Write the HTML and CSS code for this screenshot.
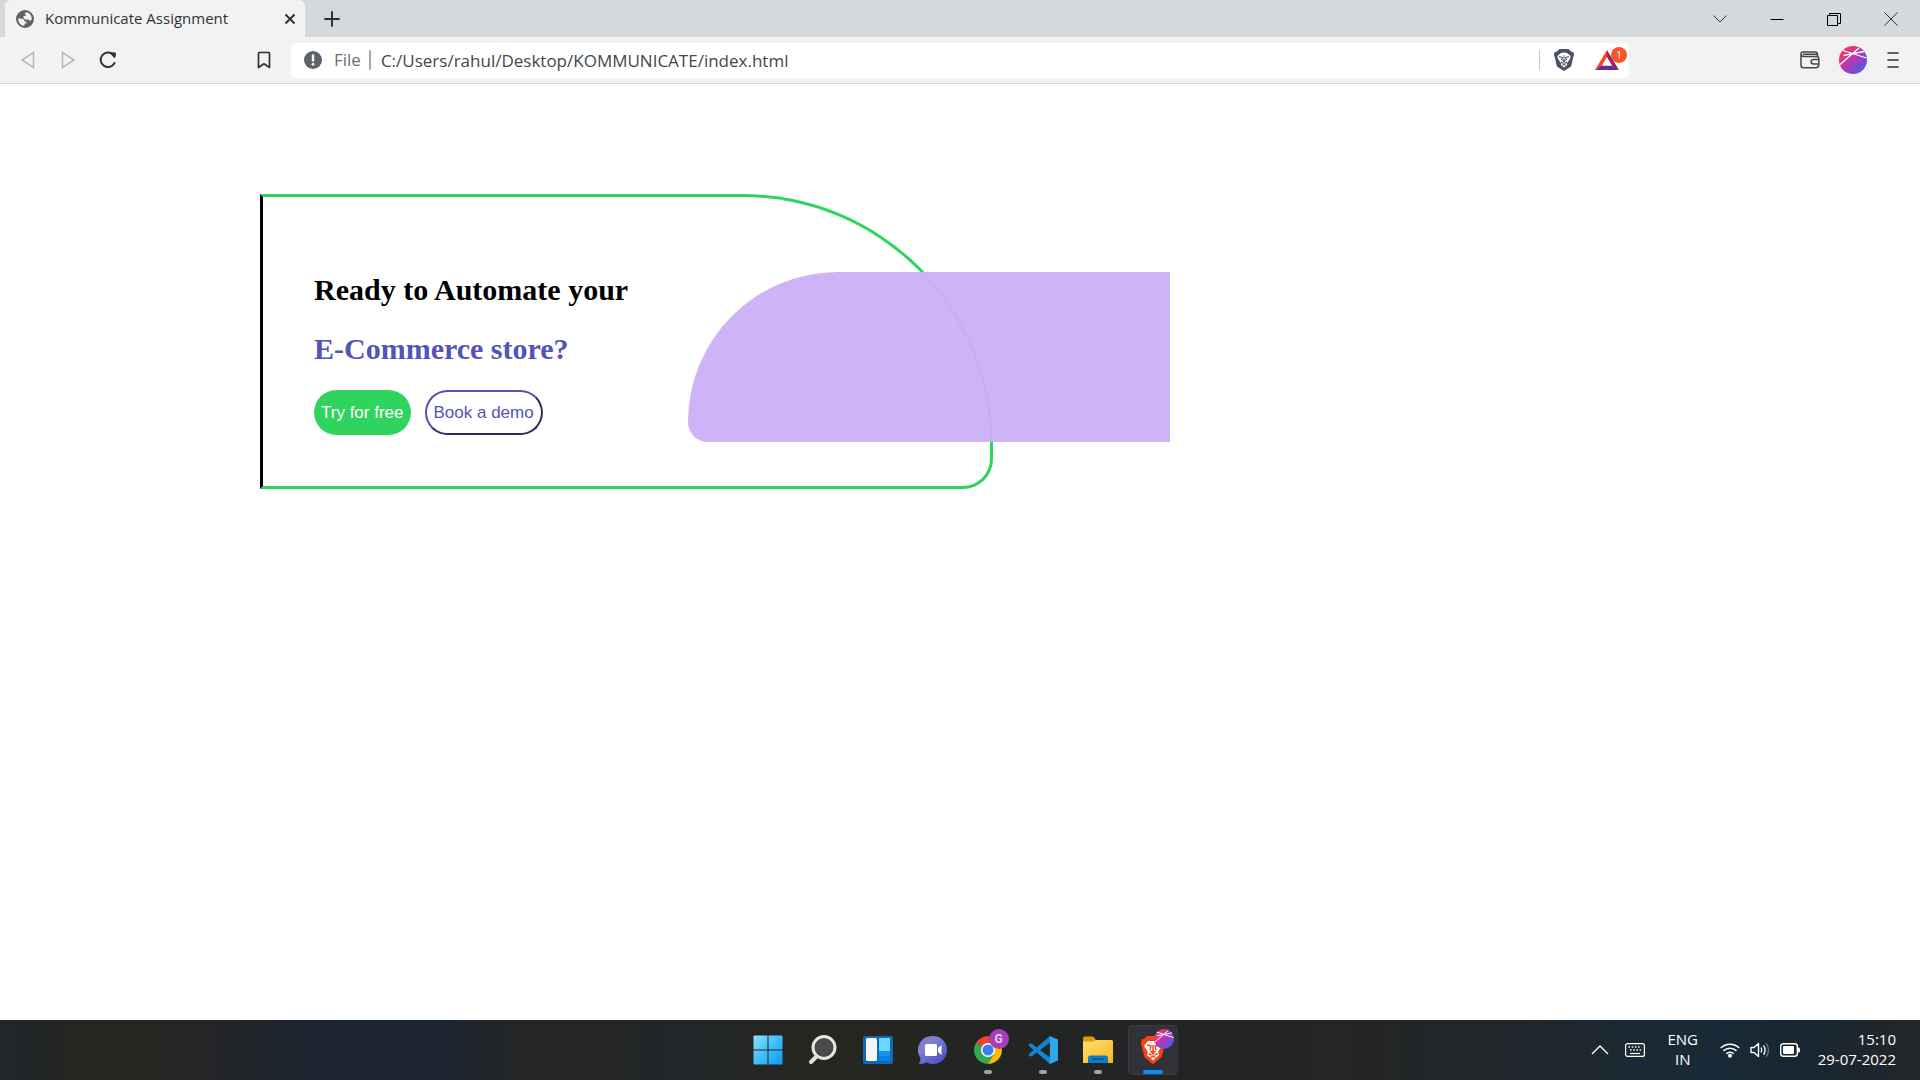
FILE: index.html
```html
<!DOCTYPE html>
<html lang="en">
<head>
<meta charset="utf-8">
<title>Kommunicate Assignment</title>
<link rel="stylesheet" href="styles.css">
</head>
<body>
<header class="browser">
  <div class="tabstrip">
    <div class="tab">
      <svg class="tab-icon" width="18" height="18" viewBox="0 0 18 18"><circle cx="9" cy="9" r="9" fill="#5f6368"/><path d="M2.200 8.500C7 8 8.500 9 8.500 11.500H10.500V13.500H8.500V15.800C4.500 15.800 2.200 12.500 2.200 8.500z" fill="#f2f2f2"/><path d="M10 2.200C14 2.500 16 6 15.800 9.500L14 11 12.500 9.500H9L7.500 8V6H9.500V4L8.500 3.500z" fill="#f2f2f2"/></svg>
      <span class="tab-title">Kommunicate Assignment</span>
      <button class="tab-close" aria-label="Close tab"><svg width="12" height="12" viewBox="0 0 12 12"><path d="M1.500 1.500l9 9M10.500 1.500l-9 9" stroke="#303236" stroke-width="2"/></svg></button>
    </div>
    <button class="new-tab" aria-label="New tab"><svg width="16" height="16" viewBox="0 0 16 16"><path d="M8 1v14M1 8h14" stroke="#303236" stroke-width="2" stroke-linecap="round"/></svg></button>
    <div class="window-controls">
      <button class="window-button" aria-label="Search tabs"><svg width="14" height="14" viewBox="0 0 14 14"><path d="M.5 3.500L7 10l6.500-6.500" fill="none" stroke="#333"/></svg></button>
      <button class="window-button" aria-label="Minimize"><svg width="14" height="14" viewBox="0 0 14 14"><path d="M.5 7.500h13" stroke="#000"/></svg></button>
      <button class="window-button" aria-label="Restore"><svg width="14" height="14" viewBox="0 0 14 14"><path d="M.5 3.500h10v10h-10zM2.500 3V1.500h11V11.500H11" fill="none" stroke="#000"/></svg></button>
      <button class="window-button" aria-label="Close window"><svg width="14" height="14" viewBox="0 0 14 14"><path d="M.5.5l13 13M13.500.5l-13 13" stroke="#333"/></svg></button>
    </div>
  </div>
  <div class="toolbar">
    <button class="tool" aria-label="Back" disabled><svg width="18" height="18" viewBox="0 0 18 18"><path d="M14.500 1.500v15L3 9z" fill="none" stroke="#b9b9b9" stroke-width="1.500" stroke-linejoin="round"/></svg></button>
    <button class="tool" aria-label="Forward" disabled><svg width="18" height="18" viewBox="0 0 18 18"><path d="M3.500 1.500v15L15 9z" fill="none" stroke="#b9b9b9" stroke-width="1.500" stroke-linejoin="round"/></svg></button>
    <button class="tool" aria-label="Reload"><svg width="18" height="18" viewBox="0 0 18 18"><path d="M14 3.500A7.300 7.300 0 1 0 15.500 12" fill="none" stroke="#303236" stroke-width="2" stroke-linecap="round"/><path d="M11.500 2.500q0-1.500 1.500-1.200l3 .2q1.300.2 1 1.500l-.5 3q-.5 1.200-1.700.7z" fill="#303236"/></svg></button>
    <button class="tool bookmark" aria-label="Bookmark this page"><svg width="14" height="18" viewBox="0 0 14 18"><path d="M1.500 2.200q0-.7.700-.7h9.600q.7 0 .7.700v14.300L7 12.800l-5.500 3.700z" fill="none" stroke="#303236" stroke-width="1.700" stroke-linejoin="round"/></svg></button>
    <div class="address">
      <svg width="18" height="18" viewBox="0 0 18 18"><circle cx="9" cy="9" r="9" fill="#5f6368"/><path d="M9 4.500v5" stroke="#fff" stroke-width="2.400" stroke-linecap="round"/><circle cx="9" cy="13.300" r="1.400" fill="#fff"/></svg>
      <label class="scheme" for="url">File</label>
      <input class="url" id="url" type="text" value="C:/Users/rahul/Desktop/KOMMUNICATE/index.html">
      <button class="tool shield" aria-label="Brave Shields"><svg width="20" height="22" viewBox="0 0 20 22"><path d="M5.500 0h9L17 2.500l2.300.5L20 6l-1 3-1.500 7q-.3 1.300-1.500 2.200L10 22l-6-3.800Q2.800 17.300 2.500 16L1 9 0 6l.7-3L3 2.500z" fill="#4c5063"/><path d="M10 3.500l3 .5 3.700 3-1 3.500-3 4 .5 1.500L10 18.500 6.800 16l.5-1.500-3-4-1-3.500L7 4z" fill="#fff"/><path d="M5 7.500l3.500 1-1 2.500M15 7.500l-3.500 1 1 2.500M7 13l2 1.300M13 13l-2 1.300" fill="none" stroke="#4c5063" stroke-width="1.100"/><path d="M10 6v5M8.500 11.300h3L10 13zM10 13v2M8.200 16.200L10 15l1.800 1.200" fill="#4c5063" stroke="#4c5063" stroke-width=".8"/></svg></button>
      <button class="tool rewards" aria-label="Brave Rewards"><svg width="24" height="20" viewBox="0 0 24 20"><path d="M12 0L0 20l7.500-4L12 8z" fill="#ff4724"/><path d="M12 0l12 20-7-4L12 8z" fill="#9e1f63"/><path d="M0 20h24l-7-4.500H7z" fill="#662d91"/><path d="M12 7l-5 8.500h10z" fill="#fff"/></svg><span class="rewards-count">1</span></button>
    </div>
    <button class="tool" aria-label="Wallet"><svg width="20" height="18" viewBox="0 0 20 18"><path d="M17.500 5.500V2.800Q17 1 15 1H3Q1 1 1 3v11q0 2.800 2.800 2.800h12q2.700 0 2.700-2.500M1 3.500q.5 2 2.500 2h13q2.300 0 2.300 2v7M3 3.300h14M18.800 8.500h-5q-2.700 0-2.700 2.200t2.700 2.200h5z" fill="none" stroke="#44464b" stroke-width="1.500"/></svg></button>
    <button class="tool profile" aria-label="Profile"><svg width="28" height="28" viewBox="0 0 28 28"><defs><linearGradient id="orb" x1=".1" y1=".15" x2=".85" y2=".9"><stop offset="0" stop-color="#f03a5b"/><stop offset=".45" stop-color="#bd35b0"/><stop offset="1" stop-color="#4d59e6"/></linearGradient></defs><circle cx="14" cy="14" r="14" fill="url(#orb)"/><path d="M4 4.500L27.500 12M1 18.500L20 2M4.500 9.500L25 5.500" fill="none" stroke="#fff" stroke-width="1.300"/></svg></button>
    <button class="tool" aria-label="Menu"><svg width="12" height="16" viewBox="0 0 12 16"><path d="M1 1h10M1 8h10M1 15h10" stroke="#303236" stroke-width="1.600" stroke-linecap="round"/></svg></button>
  </div>
</header>

<main class="page">
  <section class="card">
    <div class="shape"></div>
    <h1 class="headline">Ready to Automate your</h1>
    <h2 class="headline accent">E-Commerce store?</h2>
    <div class="actions">
      <button class="action try">Try for free</button>
      <button class="action demo">Book a demo</button>
    </div>
  </section>
</main>

<footer class="taskbar">
  <nav class="apps">
    <button class="app" aria-label="Start"><svg width="30" height="30" viewBox="0 0 30 30"><defs><linearGradient id="win" gradientUnits="userSpaceOnUse" x1="0" y1="0" x2="30" y2="30"><stop offset="0" stop-color="#8ee3fd"/><stop offset=".5" stop-color="#40c0fa"/><stop offset="1" stop-color="#0a98f5"/></linearGradient></defs><path d="M1 .5h13.500V14.500H.5V1zM15.500.5H29l.5.5v13.500h-14zM.5 15.500h14v14H1l-.5-.5zM15.500 15.500h14V29l-.5.5H15.500z" fill="url(#win)"/></svg></button>
    <button class="app" aria-label="Search"><svg width="30" height="30" viewBox="0 0 30 30"><path d="M9.500 20.500L3 27" stroke="#dedede" stroke-width="4" stroke-linecap="round"/><circle cx="16" cy="12.500" r="11" fill="#4a4a48" stroke="#e6e6e6" stroke-width="3"/></svg></button>
    <button class="app" aria-label="Widgets"><svg width="30" height="30" viewBox="0 0 30 30"><rect y="1" width="30" height="28" rx="2" fill="#1267b7"/><rect x="3" y="3" width="11" height="23" rx="1.500" fill="#f5f5f5"/><path d="M16 3h11v13H16z" fill="#6cd7ff"/><path d="M16 16h11v5H16z" fill="#1693ec"/><path d="M16 21h11v5H16z" fill="#0a83e8"/></svg></button>
    <button class="app" aria-label="Chat"><svg width="30" height="30" viewBox="0 0 30 30"><defs><linearGradient id="chat" x1="0" y1="0" x2=".8" y2="1"><stop offset="0" stop-color="#9a6d9f"/><stop offset=".35" stop-color="#7b83d6"/><stop offset="1" stop-color="#4f4cc4"/></linearGradient></defs><path d="M15 1A14 14 0 0 1 15 29q-4 0-6-1.500-4 1.500-8 1.500 1.500-3 1.500-6A14 14 0 0 1 15 1z" fill="url(#chat)"/><rect x="7" y="9" width="12" height="12" rx="1.500" fill="#fff"/><path d="M20 13l3.500-3v10L20 17z" fill="#fff"/></svg></button>
    <button class="app running" aria-label="Google Chrome"><svg width="30" height="30" viewBox="0 0 30 30"><path d="M15 15L2.900 8A14 14 0 0 1 27.100 8H15z" fill="#ea4335"/><path d="M15 15L2.900 8A14 14 0 0 0 15 29l6-10.500z" fill="#34a853"/><path d="M15 8h12.100A14 14 0 0 1 15 29l6.100-10.500z" fill="#fbbc05"/><circle cx="15" cy="15" r="7" fill="#fff"/><circle cx="15" cy="15" r="5.500" fill="#3b7ded"/></svg><span class="app-badge letter">G</span></button>
    <button class="app running" aria-label="Visual Studio Code"><svg width="30" height="30" viewBox="0 0 30 30"><path d="M1 9.500q1.300-1.700 3.200-.5L22 22.500V29L1 11z" fill="#0d87d6"/><path d="M1 20.500q1.300 1.700 3.200.5L22 7.500V1L1 19z" fill="#1683cb"/><path d="M21 .7L30 4.500v21L21 29.300q.9-.8.9-2V2.700q0-1.200-.9-2z" fill="#2fa6ee"/></svg></button>
    <button class="app running" aria-label="File Explorer"><svg width="30" height="30" viewBox="0 0 30 30"><defs><linearGradient id="folder" x1="0" y1="0" x2="1" y2="1"><stop offset="0" stop-color="#ffdf72"/><stop offset="1" stop-color="#f8b818"/></linearGradient></defs><path d="M0 3q0-1.500 1.500-1.500H10l3 3.500v3H0z" fill="#df9a08"/><path d="M0 6.500h10L13 5h15.500Q30 5 30 6.500V28H0z" fill="url(#folder)"/><path d="M5 28v-5q0-2.500 2.500-2.500h15q2.500 0 2.500 2.500v5z" fill="#087dcb"/><path d="M10 24h10" stroke="#064e86" stroke-width="1.500" stroke-linecap="round"/></svg></button>
    <button class="app active" aria-label="Brave"><svg width="30" height="30" viewBox="0 0 30 30"><path d="M9 1h12l3 3 2.500.5L27 9l-3.500 13L15 29.500 6.500 22 3 9l.5-4.500L6 4z" fill="#fb4016"/><path d="M10 6h10l4 5-4 6 1 3-6 5.500L9 20l1-3-4-6z" fill="#fff"/><path d="M9 10l4 1-1 4M21 10l-4 1 1 4M15 10v6M10.500 18.500l3 1.500M19.500 18.500l-3 1.500M13 16.500h4L15 19zM12.500 23l2.500-2 2.500 2" fill="none" stroke="#fb4016" stroke-width="1.400"/></svg><span class="app-badge"><svg width="20" height="20" viewBox="0 0 28 28"><circle cx="14" cy="14" r="14" fill="url(#orb)"/><path d="M4 4.500L27.500 12M1 18.500L20 2M4.500 9.500L25 5.500" fill="none" stroke="#fff" stroke-width="1.400"/></svg></span></button>
  </nav>
  <div class="tray">
    <button class="tray-button" aria-label="Show hidden icons"><svg width="18" height="10" viewBox="0 0 18 10"><path d="M1 9l8-8 8 8" fill="none" stroke="#fff" stroke-width="1.300"/></svg></button>
    <button class="tray-button" aria-label="Touch keyboard"><svg width="20" height="14" viewBox="0 0 20 14"><rect x=".6" y=".6" width="18.800" height="12.800" rx="2" fill="none" stroke="#fff" stroke-width="1.200"/><path d="M3.500 4h13M5 7h11" stroke="#fff" stroke-width="1.500" stroke-dasharray="1.500 1.700"/><path d="M5 10.500h10" stroke="#fff" stroke-width="1.200"/></svg></button>
    <button class="language">ENG<br>IN</button>
    <button class="status" aria-label="Network, volume and battery">
      <svg width="20" height="16" viewBox="0 0 20 16"><path d="M.8 6a13 13 0 0 1 18.400 0M3.500 8.900a9.200 9.200 0 0 1 13 0M6.300 11.700a5.200 5.200 0 0 1 7.400 0" fill="none" stroke="#fff" stroke-width="1.500"/><circle cx="10" cy="13.800" r="2" fill="#fff"/></svg>
      <svg width="20" height="18" viewBox="0 0 20 18"><path d="M1 6.500h3L8.500 2.500v13L4 11.500H1z" fill="none" stroke="#fff" stroke-width="1.400" stroke-linejoin="round"/><path d="M11 6.500q1.600 2.500 0 5M13.500 4.300q3.200 4.700 0 9.400" fill="none" stroke="#fff" stroke-width="1.300"/><path d="M16 2q5 7 0 14" fill="none" stroke="#65717b" stroke-width="1.300"/></svg>
      <svg width="20" height="14" viewBox="0 0 20 14"><rect x=".7" y=".7" width="16.600" height="12.600" rx="2.500" fill="none" stroke="#fff" stroke-width="1.400"/><rect x="3" y="3" width="11" height="8" rx="1" fill="#fff"/><path d="M18 4.500h1q1 0 1 2.500t-1 2.500h-1z" fill="#fff"/></svg>
    </button>
    <button class="clock"><time datetime="2022-07-29T15:10">15:10<br>29-07-2022</time></button>
  </div>
</footer>
</body>
</html>
```

FILE: styles.css
```css
* {
  box-sizing: border-box;
}

body {
  margin: 0;
  min-height: 100vh;
  display: flex;
  flex-direction: column;
  background: #fff;
  font-family: "Open Sans", "Noto Sans", sans-serif;
}

button {
  padding: 0;
  border: 0;
  background: none;
  font: inherit;
  color: inherit;
}

svg {
  display: block;
  flex: none;
}

/* Browser frame */

.tabstrip {
  display: flex;
  height: 37px;
  padding: 0 1px 0 5px;
  background: #d5d9dc;
}

.tab {
  display: flex;
  align-items: center;
  width: 300px;
  padding: 0 9px 0 11px;
  gap: 11px;
  border-radius: 6px 6px 0 0;
  background: #f2f2f2;
  color: #303236;
  font-size: 15px;
  line-height: 20px;
}

.tab-title {
  flex: 1;
  padding-bottom: 2px;
  white-space: nowrap;
}

.tab-close,
.new-tab,
.window-button,
.tool {
  display: flex;
  align-items: center;
  justify-content: center;
}

.new-tab {
  width: 54px;
}

.window-controls {
  display: flex;
  margin-left: auto;
}

.window-button {
  width: 57px;
}

.toolbar {
  display: flex;
  align-items: center;
  height: 47px;
  padding: 0 7px 0 8px;
  border-bottom: 1px solid #d5d6d8;
  background: #f2f2f2;
}

.tool {
  flex: none;
  width: 40px;
  height: 36px;
}

.bookmark {
  margin: 0 7px 0 116px;
}

.address {
  display: flex;
  flex: 1;
  align-items: center;
  height: 35px;
  margin-right: 161px;
  padding-left: 13px;
  border-radius: 5px;
  background: #fff;
  font-size: 17px;
}

.scheme {
  margin-left: 12px;
  padding-right: 8px;
  border-right: 2px solid #aaa;
  color: #6b6e73;
  line-height: 20px;
}

.url {
  flex: 1;
  min-width: 0;
  padding: 0 0 0 10px;
  border: 0;
  outline: 0;
  background: none;
  color: #44464a;
  font: inherit;
}

.shield {
  width: 50px;
  height: 20px;
  padding-right: 2px;
  border-left: 1px solid #c4c4c4;
}

.rewards {
  position: relative;
  padding-right: 5px;
}

.profile {
  margin-left: 3px;
}

.rewards-count {
  position: absolute;
  top: 5px;
  right: 2px;
  width: 16px;
  border-radius: 8px;
  background: #fb542b;
  color: #fff;
  font-size: 10px;
  line-height: 16px;
  text-align: center;
}

/* Page content */

.page {
  flex: 1;
  padding: 110px 260px;
}

.card {
  position: relative;
  max-width: 733px;
  padding: 75px 51px 51px;
  border: 3px solid #2fd45e;
  border-left-color: #000;
  border-radius: 0 250px 30px 0;
}

.shape {
  position: absolute;
  top: 75px;
  left: 425px;
  width: 482px;
  height: 170px;
  border-radius: 150px 0 0 20px;
  background: #cbb0f7;
  opacity: 0.95;
}

.headline {
  margin: 0 0 24px;
  color: #000;
  font: bold 30px/35px "Liberation Serif", "Times New Roman", serif;
}

.accent {
  color: #5553b7;
}

.actions {
  display: flex;
  gap: 14px;
}

.action {
  height: 45px;
  padding: 0 7px;
  border-radius: 23px;
  font: 17px/20px "Liberation Sans", Arial, sans-serif;
}

.try {
  background: #2fd45e;
  color: #fff;
}

.demo {
  border: 2px outset #5553b7;
  color: #5553b7;
}

/* Taskbar */

.taskbar {
  display: grid;
  grid-template-columns: 1fr auto 1fr;
  align-items: center;
  height: 60px;
  background: linear-gradient(90deg, #20262a 0, #27251f 5%, #252525 10%, #1c2530 16%, #1b2632 23%, #252525 27%, #222628 36%, #262620 43%, #222524 52%, #242524 70%, #20272d 80%, #182a37 89%, #182631 94%, #232729 100%);
  color: #fff;
  font-size: 15px;
}

.apps {
  display: flex;
  grid-column: 2;
  gap: 5px;
}

.app {
  position: relative;
  display: flex;
  align-items: center;
  justify-content: center;
  width: 50px;
  height: 50px;
}

.active {
  border-radius: 5px;
  background: #303237;
  box-shadow: inset 0 0 0 1px #3b3d41;
}

.running::after,
.active::after {
  position: absolute;
  bottom: 1px;
  width: 8px;
  height: 4px;
  border-radius: 2px;
  background: #a0a2a4;
  content: "";
}

.active::after {
  width: 20px;
  background: #0a90f8;
}

.app-badge {
  position: absolute;
  top: 4px;
  right: 4px;
  width: 20px;
  height: 20px;
}

.letter {
  border-radius: 10px;
  background: #a53fb5;
  color: #eac9f0;
  font: bold 12px/20px Roboto, sans-serif;
  text-align: center;
}

.tray {
  display: flex;
  align-items: center;
  justify-content: flex-end;
  padding-right: 24px;
  line-height: 20px;
}

.tray-button {
  display: flex;
  justify-content: center;
  width: 35px;
}

.language {
  width: 60px;
  margin-right: 7px;
  padding-bottom: 2px;
  text-align: center;
}

.status {
  display: flex;
  align-items: center;
  gap: 10px;
}

.clock {
  margin-left: 18px;
  padding-bottom: 2px;
  text-align: right;
}
```
